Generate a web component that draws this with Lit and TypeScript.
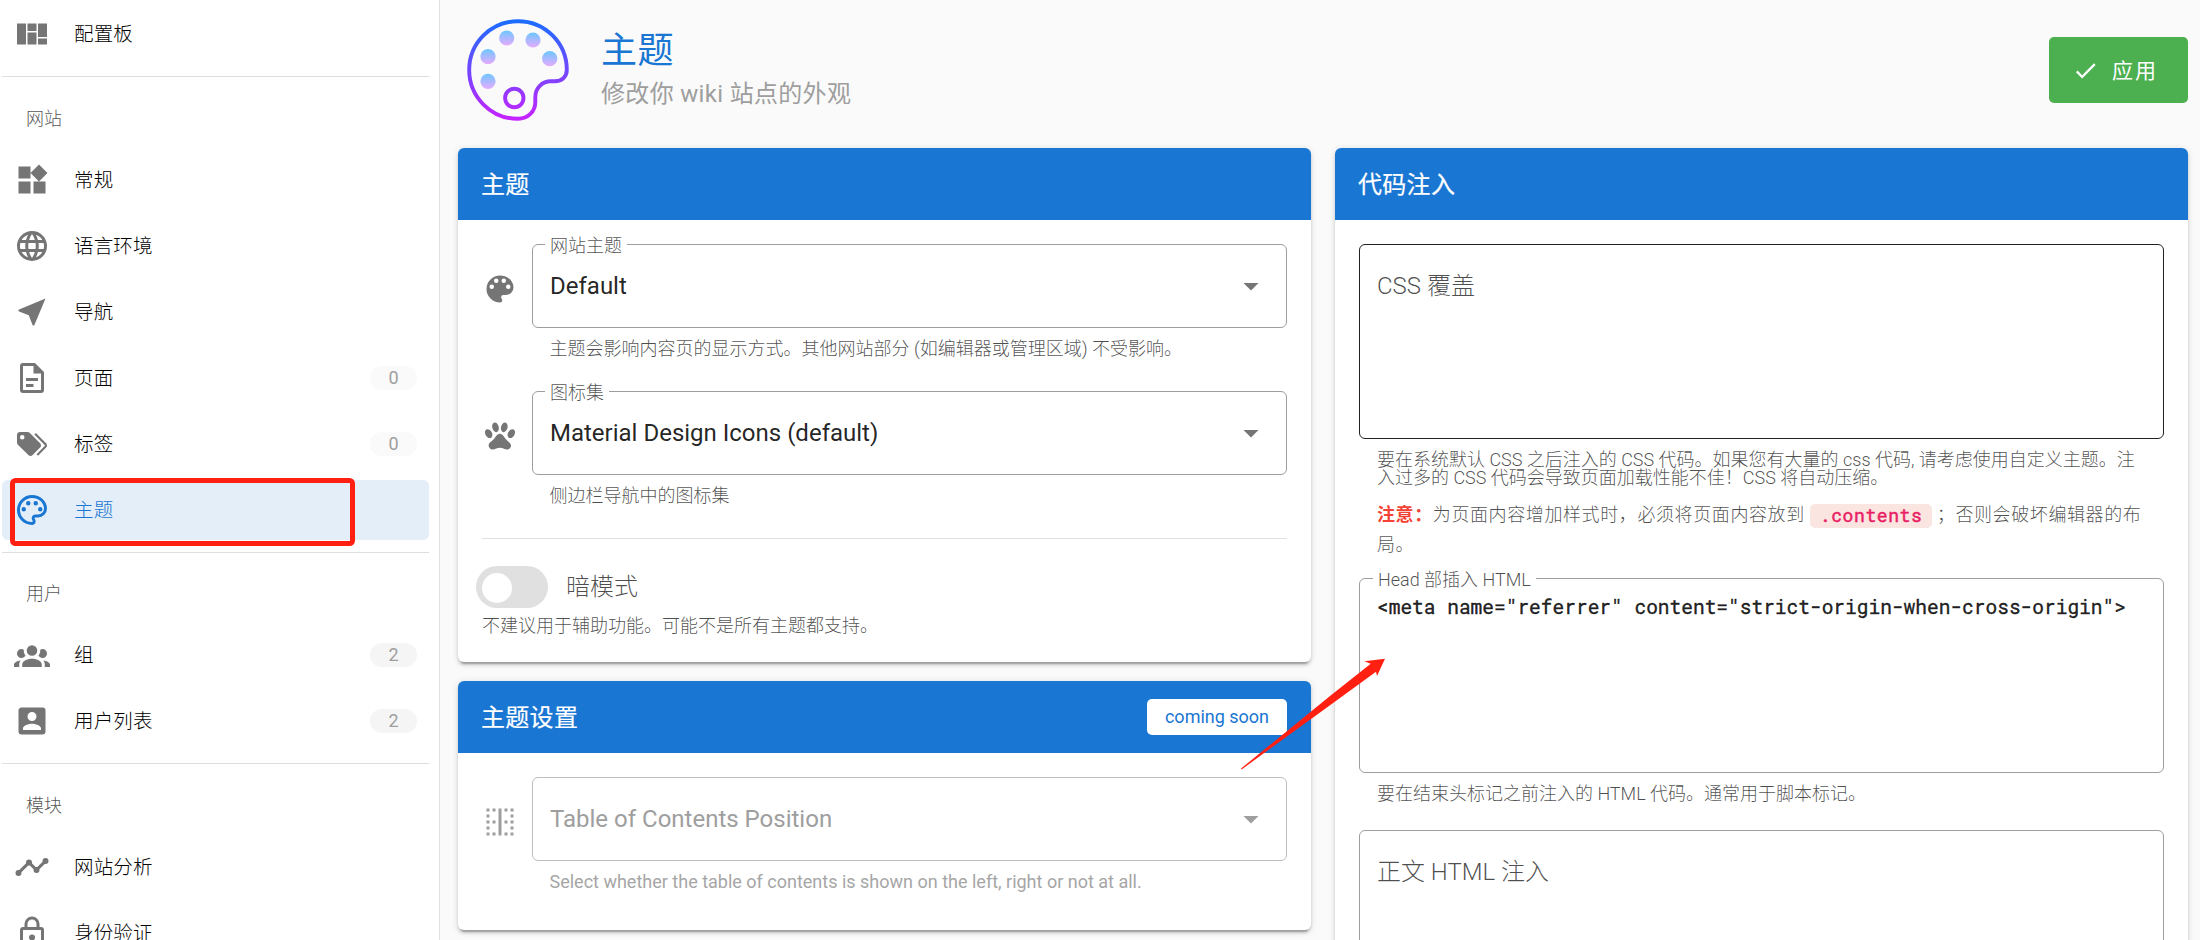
import { LitElement, html, css, svg, nothing } from "lit";
import { customElement, property } from "lit/decorators.js";
import { classMap } from "lit/directives/class-map.js";

const ICONS: Record<string, string> = {
  dashboard: "M2,5V19H8V5H2M9,5V10H15V5H9M16,5V14H22V5H16M9,11V19H15V11H9M16,15V19H22V15H16",
  widgets: "M3,3H11V11H3V3M3,13H11V21H3V13M13,13H21V21H13V13M16.66,1.69L22.31,7.34L16.66,13L11,7.34L16.66,1.69Z",
  web: "M16.36,14C16.44,13.34 16.5,12.68 16.5,12C16.5,11.32 16.44,10.66 16.36,10H19.74C19.9,10.64 20,11.31 20,12C20,12.69 19.9,13.36 19.74,14M14.59,19.56C15.19,18.45 15.65,17.25 15.97,16H18.92C17.96,17.65 16.43,18.93 14.59,19.56M14.34,14H9.66C9.56,13.34 9.5,12.68 9.5,12C9.5,11.32 9.56,10.65 9.66,10H14.34C14.43,10.65 14.5,11.32 14.5,12C14.5,12.68 14.43,13.34 14.34,14M12,19.96C11.17,18.76 10.5,17.43 10.09,16H13.91C13.5,17.43 12.83,18.76 12,19.96M8,8H5.08C6.03,6.34 7.57,5.06 9.4,4.44C8.8,5.55 8.35,6.75 8,8M5.08,16H8C8.35,17.25 8.8,18.45 9.4,19.56C7.57,18.93 6.03,17.65 5.08,16M4.26,14C4.1,13.36 4,12.69 4,12C4,11.31 4.1,10.64 4.26,10H7.64C7.56,10.66 7.5,11.32 7.5,12C7.5,12.68 7.56,13.34 7.64,14M12,4.03C12.83,5.23 13.5,6.57 13.91,8H10.09C10.5,6.57 11.17,5.23 12,4.03M18.92,8H15.97C15.65,6.75 15.19,5.55 14.59,4.44C16.43,5.07 17.96,6.34 18.92,8M12,2C6.47,2 2,6.5 2,12A10,10 0 0,0 12,22A10,10 0 0,0 22,12A10,10 0 0,0 12,2Z",
  near: "M21,3L3,10.53V11.5L9.84,14.16L12.5,21H13.46L21,3Z",
  file: "M6,2A2,2 0 0,0 4,4V20A2,2 0 0,0 6,22H18A2,2 0 0,0 20,20V8L14,2H6M6,4H13V9H18V20H6V4M8,12V14H16V12H8M8,16V18H13V16H8Z",
  tags: "M5.5,9A1.5,1.5 0 0,0 7,7.5A1.5,1.5 0 0,0 5.5,6A1.5,1.5 0 0,0 4,7.5A1.5,1.5 0 0,0 5.5,9M17.41,11.58C17.77,11.94 18,12.44 18,13C18,13.55 17.78,14.05 17.41,14.41L12.41,19.41C12.05,19.77 11.55,20 11,20C10.45,20 9.95,19.78 9.58,19.41L2.59,12.42C2.22,12.05 2,11.55 2,11V6C2,4.89 2.89,4 4,4H9C9.55,4 10.05,4.22 10.41,4.58L17.41,11.58M13.54,5.71L14.54,4.71L21.41,11.58C21.78,11.94 22,12.45 22,13C22,13.55 21.78,14.05 21.42,14.41L16.04,19.79L15.04,18.79L20.75,13L13.54,5.71Z",
  paletteOutline: "M12,22A10,10 0 0,1 2,12A10,10 0 0,1 12,2C17.5,2 22,6 22,11A6,6 0 0,1 16,17H14.2C13.9,17 13.7,17.2 13.7,17.5C13.7,17.6 13.8,17.7 13.8,17.8C14.2,18.3 14.4,18.9 14.4,19.5C14.5,20.9 13.4,22 12,22M12,4A8,8 0 0,0 4,12A8,8 0 0,0 12,20C12.3,20 12.5,19.8 12.5,19.5C12.5,19.3 12.4,19.2 12.4,19.1C12,18.6 11.8,18.1 11.8,17.5C11.8,16.1 12.9,15 14.3,15H16A4,4 0 0,0 20,11C20,7.1 16.4,4 12,4M6.5,10A1.5,1.5 0 0,1 8,11.5A1.5,1.5 0 0,1 6.5,13A1.5,1.5 0 0,1 5,11.5A1.5,1.5 0 0,1 6.5,10M9.5,6A1.5,1.5 0 0,1 11,7.5A1.5,1.5 0 0,1 9.5,9A1.5,1.5 0 0,1 8,7.5A1.5,1.5 0 0,1 9.5,6M14.5,6A1.5,1.5 0 0,1 16,7.5A1.5,1.5 0 0,1 14.5,9A1.5,1.5 0 0,1 13,7.5A1.5,1.5 0 0,1 14.5,6M17.5,10A1.5,1.5 0 0,1 19,11.5A1.5,1.5 0 0,1 17.5,13A1.5,1.5 0 0,1 16,11.5A1.5,1.5 0 0,1 17.5,10Z",
  group: "M12,5.5A3.5,3.5 0 0,1 15.5,9A3.5,3.5 0 0,1 12,12.5A3.5,3.5 0 0,1 8.5,9A3.5,3.5 0 0,1 12,5.5M5,8C5.56,8 6.08,8.15 6.53,8.42C6.38,9.85 6.8,11.27 7.66,12.38C7.16,13.34 6.16,14 5,14A3,3 0 0,1 2,11A3,3 0 0,1 5,8M19,8A3,3 0 0,1 22,11A3,3 0 0,1 19,14C17.84,14 16.84,13.34 16.34,12.38C17.2,11.27 17.62,9.85 17.47,8.42C17.92,8.15 18.44,8 19,8M5.5,18.25C5.5,16.18 8.41,14.5 12,14.5C15.59,14.5 18.5,16.18 18.5,18.25V20H5.5V18.25M0,20V18.5C0,17.11 1.89,15.94 4.45,15.6C3.86,16.28 3.5,17.22 3.5,18.25V20H0M24,20H20.5V18.25C20.5,17.22 20.14,16.28 19.55,15.6C22.11,15.94 24,17.11 24,18.5V20Z",
  account: "M6,17C6,15 10,13.9 12,13.9C14,13.9 18,15 18,17V18H6M15,9A3,3 0 0,1 12,12A3,3 0 0,1 9,9A3,3 0 0,1 12,6A3,3 0 0,1 15,9M3,5V19A2,2 0 0,0 5,21H19A2,2 0 0,0 21,19V5A2,2 0 0,0 19,3H5C3.89,3 3,3.9 3,5Z",
  timeline: "M23,8A2,2 0 0,1 21,10C20.82,10 20.65,9.98 20.49,9.93L16.93,13.48C16.98,13.64 17,13.82 17,14A2,2 0 0,1 15,16A2,2 0 0,1 13,14C13,13.82 13.02,13.64 13.07,13.48L10.52,10.93C10.36,10.98 10.18,11 10,11C9.82,11 9.64,10.98 9.48,10.93L4.93,15.49C4.98,15.65 5,15.82 5,16A2,2 0 0,1 3,18A2,2 0 0,1 1,16A2,2 0 0,1 3,14C3.18,14 3.35,14.02 3.51,14.07L8.07,9.52C8.02,9.36 8,9.18 8,9A2,2 0 0,1 10,7A2,2 0 0,1 12,9C12,9.18 11.98,9.36 11.93,9.52L14.48,12.07C14.64,12.02 14.82,12 15,12C15.18,12 15.36,12.02 15.52,12.07L19.07,8.51C19.02,8.35 19,8.18 19,8A2,2 0 0,1 21,6A2,2 0 0,1 23,8Z",
  lock: "M12,17C10.89,17 10,16.1 10,15C10,13.89 10.89,13 12,13A2,2 0 0,1 14,15A2,2 0 0,1 12,17M18,20V10H6V20H18M18,8A2,2 0 0,1 20,10V20A2,2 0 0,1 18,22H6C4.89,22 4,21.1 4,20V10C4,8.89 4.89,8 6,8H7V6A5,5 0 0,1 12,1A5,5 0 0,1 17,6V8H18M12,3A3,3 0 0,0 9,6V8H15V6A3,3 0 0,0 12,3Z",
  palette: "M17.5,12A1.5,1.5 0 0,1 16,10.5A1.5,1.5 0 0,1 17.5,9A1.5,1.5 0 0,1 19,10.5A1.5,1.5 0 0,1 17.5,12M14.5,8A1.5,1.5 0 0,1 13,6.5A1.5,1.5 0 0,1 14.5,5A1.5,1.5 0 0,1 16,6.5A1.5,1.5 0 0,1 14.5,8M9.5,8A1.5,1.5 0 0,1 8,6.5A1.5,1.5 0 0,1 9.5,5A1.5,1.5 0 0,1 11,6.5A1.5,1.5 0 0,1 9.5,8M6.5,12A1.5,1.5 0 0,1 5,10.5A1.5,1.5 0 0,1 6.5,9A1.5,1.5 0 0,1 8,10.5A1.5,1.5 0 0,1 6.5,12M12,3A9,9 0 0,0 3,12A9,9 0 0,0 12,21A1.5,1.5 0 0,0 13.5,19.5C13.5,19.11 13.35,18.76 13.11,18.5C12.88,18.23 12.73,17.88 12.73,17.5A1.5,1.5 0 0,1 14.23,16H16A5,5 0 0,0 21,11C21,6.58 16.97,3 12,3Z",
  paw: "M8.35,3C9.53,2.83 10.78,4.12 11.14,5.9C11.5,7.67 10.85,9.25 9.67,9.43C8.5,9.61 7.24,8.32 6.87,6.54C6.5,4.77 7.17,3.19 8.35,3M15.5,3C16.69,3.19 17.35,4.77 17,6.54C16.62,8.32 15.37,9.61 14.19,9.43C13,9.25 12.35,7.67 12.72,5.9C13.08,4.12 14.33,2.83 15.5,3M3,7.6C4.14,7.11 5.69,8 6.5,9.55C7.26,11.13 7,12.79 5.87,13.28C4.74,13.77 3.2,12.89 2.41,11.32C1.62,9.75 1.9,8.08 3,7.6M21,7.6C22.1,8.08 22.38,9.75 21.59,11.32C20.8,12.89 19.26,13.77 18.13,13.28C17,12.79 16.74,11.13 17.5,9.55C18.31,8 19.86,7.11 21,7.6M19.33,18.38C19.37,19.32 18.65,20.36 17.79,20.75C16,21.57 13.88,19.87 11.89,19.87C9.9,19.87 7.76,21.64 6,20.75C5,20.26 4.31,18.96 4.44,17.88C4.62,16.39 6.41,15.59 7.47,14.5C8.88,13.09 9.88,10.44 11.89,10.44C13.89,10.44 14.95,13.05 16.3,14.5C17.41,15.72 19.26,16.75 19.33,18.38Z",
  borderVertical: "M15,5H17V3H15M15,13H17V11H15M19,21H21V19H19M19,13H21V11H19M19,5H21V3H19M19,9H21V7H19M15,21H17V19H15M19,17H21V15H19M3,5H5V3H3M3,9H5V7H3M3,13H5V11H3M11,21H13V3H11M3,21H5V19H3M7,5H9V3H7M7,13H9V11H7M3,17H5V15H3M7,21H9V19H7V21Z",
  menuDown: "M7,10L12,15L17,10H7Z",
  check: "M21,7L9,19L3.5,13.5L4.91,12.09L9,16.17L19.59,5.59L21,7Z",
};

@customElement("mdi-icon")
class MdiIcon extends LitElement {
  @property() name = "";
  static styles = css`
    :host { display: block; width: 36px; height: 36px; flex: none; }
    svg { display: block; width: 100%; height: 100%; fill: currentColor; }
  `;
  render() {
    return html`<svg viewBox="0 0 24 24"><path d=${ICONS[this.name] ?? ""}></path></svg>`;
  }
}

type NavEntry =
  | { kind: "item"; icon: string; text: string; badge?: string; tone?: string; active?: boolean }
  | { kind: "divider" }
  | { kind: "header"; text: string };

const NAV: NavEntry[] = [
  { kind: "item", icon: "dashboard", text: "配置板" },
  { kind: "divider" },
  { kind: "header", text: "网站" },
  { kind: "item", icon: "widgets", text: "常规" },
  { kind: "item", icon: "web", text: "语言环境" },
  { kind: "item", icon: "near", text: "导航" },
  { kind: "item", icon: "file", text: "页面", badge: "0", tone: "light" },
  { kind: "item", icon: "tags", text: "标签", badge: "0", tone: "light" },
  { kind: "item", icon: "paletteOutline", text: "主题", active: true },
  { kind: "divider" },
  { kind: "header", text: "用户" },
  { kind: "item", icon: "group", text: "组", badge: "2" },
  { kind: "item", icon: "account", text: "用户列表", badge: "2" },
  { kind: "divider" },
  { kind: "header", text: "模块" },
  { kind: "item", icon: "timeline", text: "网站分析" },
  { kind: "item", icon: "lock", text: "身份验证" },
];

@customElement("admin-nav")
class AdminNav extends LitElement {
  static styles = css`
    :host {
      display: block; box-sizing: border-box; width: 440px; height: 940px; flex: none;
      overflow: hidden; background: #fff; border-right: 1px solid #e0e0e0; padding: 4px 10px 0 2px;
    }
    .item {
      display: flex; align-items: center; box-sizing: border-box; height: 60px; margin-bottom: 6px;
      padding: 0 12px; border-radius: 6px; color: #000; font-size: 19.5px; font-weight: 300;
    }
    .item mdi-icon { color: #757575; margin-right: 24px; }
    .label { flex: 1; line-height: 28px; padding-top: 2px; letter-spacing: 0.15px; }
    .active { background: #e4eef9; color: #1976d2; }
    .active mdi-icon { color: #1976d2; }
    .badge {
      width: 47px; height: 24px; border-radius: 12px; background: #f5f5f5; color: #9e9e9e;
      font-size: 18px; line-height: 23px; text-align: center; font-weight: 400;
    }
    .light { background: #fafafa; }
    .divider { height: 1px; background: #dedede; margin: 6px 0 12.5px; }
    .item + .divider { margin-top: 12px; }
    .header {
      height: 60px; line-height: 58px; padding-left: 24px; font-size: 18px; font-weight: 300;
      color: rgba(0, 0, 0, 0.7);
    }
    .item:has(+ .divider) { margin-bottom: 0; }
  `;
  render() {
    return NAV.map((e) =>
      e.kind === "divider"
        ? html`<div class="divider"></div>`
        : e.kind === "header"
        ? html`<div class="header">${e.text}</div>`
        : html`<div class=${classMap({ item: true, active: !!e.active })}>
            <mdi-icon name=${e.icon}></mdi-icon>
            <span class="label">${e.text}</span>
            ${e.badge ? html`<span class=${classMap({ badge: true, light: e.tone === "light" })}>${e.badge}</span>` : nothing}
          </div>`
    );
  }
}

@customElement("select-field")
class SelectField extends LitElement {
  @property() icon = "";
  @property() label = "";
  @property() value = "";
  @property() hint = "";
  @property({ type: Boolean, reflect: true }) disabled = false;
  static styles = css`
    :host { display: flex; color: rgba(0, 0, 0, 0.87); }
    .lead { color: #757575; margin: 26.5px 14px 0 0; }
    .col { flex: 1; }
    .box {
      position: relative; display: flex; align-items: center; box-sizing: border-box; height: 84px;
      border: 1px solid #9e9e9e; border-radius: 6px; padding: 0 17px;
    }
    .value { flex: 1; font-size: 24px; line-height: 36px; }
    .arrow { color: #757575; }
    .label {
      position: absolute; left: 12px; top: -14px; padding: 0 5px; background: #fff;
      font-size: 18px; line-height: 30px; font-weight: 300; color: rgba(0, 0, 0, 0.7);
    }
    .hint {
      padding: 12px 17.5px 0; font-size: 18px; line-height: 18px; font-weight: 300; color: rgba(0, 0, 0, 0.7);
    }
    :host([disabled]) .box { border-color: #bdbdbd; }
    :host([disabled]) .value, :host([disabled]) .lead, :host([disabled]) .arrow { color: #9e9e9e; }
    :host([disabled]) .hint { color: #a6a6a6; font-weight: 400; }
  `;
  render() {
    return html`
      <mdi-icon class="lead" name=${this.icon}></mdi-icon>
      <div class="col">
        <div class="box">
          ${this.label ? html`<span class="label">${this.label}</span>` : nothing}
          <span class="value">${this.value}</span>
          <mdi-icon class="arrow" name="menuDown"></mdi-icon>
        </div>
        <div class="hint">${this.hint}</div>
      </div>
    `;
  }
}

@customElement("code-area")
class CodeArea extends LitElement {
  @property() label = "";
  @property() value = "";
  @property({ type: Boolean, reflect: true }) hovered = false;
  static styles = css`
    :host { display: block; }
    .box {
      position: relative; box-sizing: border-box; height: 195px; border: 1px solid #9e9e9e;
      border-radius: 6px; padding: 15px 17px;
    }
    :host([hovered]) .box { border-color: #212121; }
    .float {
      position: absolute; left: 13px; top: -14px; padding: 0 5px; background: #fff;
      font-size: 18px; line-height: 30px; font-weight: 300; color: rgba(0, 0, 0, 0.7);
    }
    .placeholder { font-size: 24px; line-height: 36px; padding-top: 8px; font-weight: 300; color: rgba(0, 0, 0, 0.7); }
    .code {
      font-family: "Roboto Mono", "DejaVu Sans Mono", monospace; font-size: 19.5px; line-height: 25px;
      color: rgba(0, 0, 0, 0.87); -webkit-text-stroke: 0.4px currentColor; white-space: pre;
    }
  `;
  render() {
    return html`<div class="box">
      ${this.value
        ? html`<span class="float">${this.label}</span><div class="code">${this.value}</div>`
        : html`<div class="placeholder">${this.label}</div>`}
    </div>`;
  }
}

const DOTS = [[48.7, 28], [75, 30], [91.7, 48.7], [30, 46.7], [30, 71.3]];

@customElement("app-root")
class AppRoot extends LitElement {
  static styles = css`
    :host {
      display: flex; position: relative; width: 2200px; height: 940px; overflow: hidden; background: #fafafa;
      font-family: Roboto, "Noto Sans CJK SC", sans-serif; color: rgba(0, 0, 0, 0.87);
    }
    .main { flex: 1; padding: 0 12px 0 18px; min-width: 0; }
    .head { display: flex; align-items: center; height: 140px; margin-bottom: 8px; }
    .logo { width: 120px; height: 120px; flex: none; }
    .titles { flex: 1; padding-left: 23px; }
    .title { font-size: 36px; line-height: 46px; padding-bottom: 2px; color: #1976d2; font-weight: 400; letter-spacing: 0.4px; }
    .subtitle { font-size: 24px; line-height: 36px; color: #9e9e9e; font-weight: 400; padding-bottom: 1px; letter-spacing: 0.32px; }
    .apply {
      display: flex; align-items: center; box-sizing: border-box; width: 139px; height: 66px; padding-left: 23px;
      border-radius: 5px; background: #4caf50; color: #fff; font-size: 21px; letter-spacing: 1.9px; font-weight: 400;
    }
    .apply span { padding-bottom: 2px; }
    .apply mdi-icon { width: 27px; height: 27px; margin-right: 13px; }
    .grid { display: grid; grid-template-columns: 853px 853px; gap: 24px; align-items: start; }
    .column { display: grid; gap: 19px; }
    .card {
      background: #fff; border-radius: 6px;
      box-shadow: 0 4.5px 1.5px -3px rgba(0, 0, 0, 0.2), 0 3px 3px rgba(0, 0, 0, 0.14), 0 1.5px 7.5px rgba(0, 0, 0, 0.12);
    }
    .bar {
      display: flex; align-items: center; justify-content: space-between; height: 72px; padding: 0 24px 0 23px;
      border-radius: 6px 6px 0 0; background: #1976d2; color: #fff; font-size: 24px;
    }
    .bar .name { padding-bottom: 4px; letter-spacing: 0.3px; -webkit-text-stroke: 0.2px currentColor; }
    .chip {
      width: 140px; height: 36px; border-radius: 5px; background: #fff; color: #1976d2; font-size: 18px;
      line-height: 36px; text-align: center;
    }
    .body { padding: 24px; }
    .theme { height: 394px; }
    .theme select-field { height: 147px; }
    .rule { height: 1px; background: #e0e0e0; }
    .switch-row { display: flex; align-items: center; margin: 27px 0 0 -6px; }
    .switch { box-sizing: border-box; width: 72px; height: 42px; border-radius: 21px; background: #e0e0e0; padding: 7px 6px; }
    .knob { width: 30px; height: 30px; border-radius: 50%; background: #fff; }
    .switch-label { padding-left: 18px; font-size: 24px; line-height: 36px; font-weight: 300; color: rgba(0, 0, 0, 0.7); }
    .note { font-size: 18px; line-height: 18px; font-weight: 300; color: rgba(0, 0, 0, 0.7); }
    .switch-note { padding-top: 9px; }
    .settings { height: 129px; }
    .under { padding: 12px 18px 0; }
    .warn { letter-spacing: 0.6px; line-height: 30px; padding: 13px 12px 0 18px; height: 78px; }
    .warn strong { color: #f44336; font-weight: 700; }
    .code {
      display: inline-block; box-sizing: border-box; width: 122px; height: 24px; border-radius: 5px; background: #fbe5e1;
      color: #e91e63; padding-left: 10px; line-height: 22px; margin: 0 5px 0 5px; vertical-align: middle;
      font-family: "Roboto Mono", "DejaVu Sans Mono", monospace; font-weight: 400; letter-spacing: 0.6px;
      -webkit-text-stroke: 0.5px currentColor;
    }
    .inject { height: 1000px; }
    .tail { height: 57px; box-sizing: border-box; }
    .mark { position: absolute; left: 0; top: 0; width: 2200px; height: 940px; pointer-events: none; }
  `;

  logo() {
    return html`<svg class="logo" viewBox="0 0 120 120" fill="none">
      <defs>
        <linearGradient id="line" gradientUnits="userSpaceOnUse" x1="0" y1="10" x2="0" y2="110">
          <stop offset="0" stop-color="#1a6dff"></stop><stop offset="1" stop-color="#c822ff"></stop>
        </linearGradient>
        <linearGradient id="dot" x1="0" y1="0" x2="0" y2="1">
          <stop offset="0" stop-color="#6dc7ff"></stop><stop offset="1" stop-color="#e6abff"></stop>
        </linearGradient>
      </defs>
      <path d="M108.8,60A48.8,48.8 0 1 0 60,108.8C70,108.8 77.3,101.5 77.3,92V87C77.3,78 84,71.3 93,71.3H97C104,71.3 108.8,66.5 108.8,60Z"
        stroke="url(#line)" stroke-width="3.9"></path>
      <circle cx="56.3" cy="88" r="9.2" stroke="url(#line)" stroke-width="3.9"></circle>
      ${DOTS.map(([x, y]) => svg`<circle cx=${x} cy=${y} r="7.6" fill="url(#dot)"></circle>`)}
    </svg>`;
  }

  render() {
    return html`
      <admin-nav></admin-nav>
      <div class="main">
        <div class="head">
          ${this.logo()}
          <div class="titles">
            <div class="title">主题</div>
            <div class="subtitle">修改你 wiki 站点的外观</div>
          </div>
          <div class="apply"><mdi-icon name="check"></mdi-icon><span>应用</span></div>
        </div>
        <div class="grid">
          <div class="column">
            <section class="card">
              <div class="bar"><span class="name">主题</span></div>
              <div class="body theme">
                <select-field icon="palette" label="网站主题" value="Default"
                  hint="主题会影响内容页的显示方式。其他网站部分 (如编辑器或管理区域) 不受影响。"></select-field>
                <select-field icon="paw" label="图标集" value="Material Design Icons (default)"
                  hint="侧边栏导航中的图标集"></select-field>
                <div class="rule"></div>
                <div class="switch-row">
                  <div class="switch"><div class="knob"></div></div>
                  <span class="switch-label">暗模式</span>
                </div>
                <div class="note switch-note">不建议用于辅助功能。可能不是所有主题都支持。</div>
              </div>
            </section>
            <section class="card">
              <div class="bar"><span class="name">主题设置</span><span class="chip">coming soon</span></div>
              <div class="body settings">
                <select-field disabled icon="borderVertical" value="Table of Contents Position"
                  hint="Select whether the table of contents is shown on the left, right or not at all."></select-field>
              </div>
            </section>
          </div>
          <section class="card">
            <div class="bar"><span class="name">代码注入</span></div>
            <div class="body inject">
              <code-area hovered label="CSS 覆盖"></code-area>
              <div class="note under">要在系统默认 CSS 之后注入的 CSS 代码。如果您有大量的 css 代码, 请考虑使用自定义主题。注<br />入过多的 CSS 代码会导致页面加载性能不佳！CSS 将自动压缩。</div>
              <div class="note warn"><strong>注意：</strong>为页面内容增加样式时，必须将页面内容放到<span class="code">.contents</span>；否则会破坏编辑器的布<br />局。</div>
              <code-area label="Head 部插入 HTML" value=${'<meta name="referrer" content="strict-origin-when-cross-origin">'}></code-area>
              <div class="note under tail">要在结束头标记之前注入的 HTML 代码。通常用于脚本标记。</div>
              <code-area label="正文 HTML 注入"></code-area>
            </div>
          </section>
        </div>
      </div>
      <svg class="mark" viewBox="0 0 2200 940">
        <rect x="12.5" y="480.5" width="340" height="63" rx="3" fill="none" stroke="#ff2012" stroke-width="5"></rect>
        <path d="M1241,768.6L1330,696L1370.7,663.7L1364.3,661.3L1385,658.7L1377,676L1376,671.7L1330,705.3L1241.6,769.4Z" fill="#ff2012"></path>
      </svg>
    `;
  }
}
